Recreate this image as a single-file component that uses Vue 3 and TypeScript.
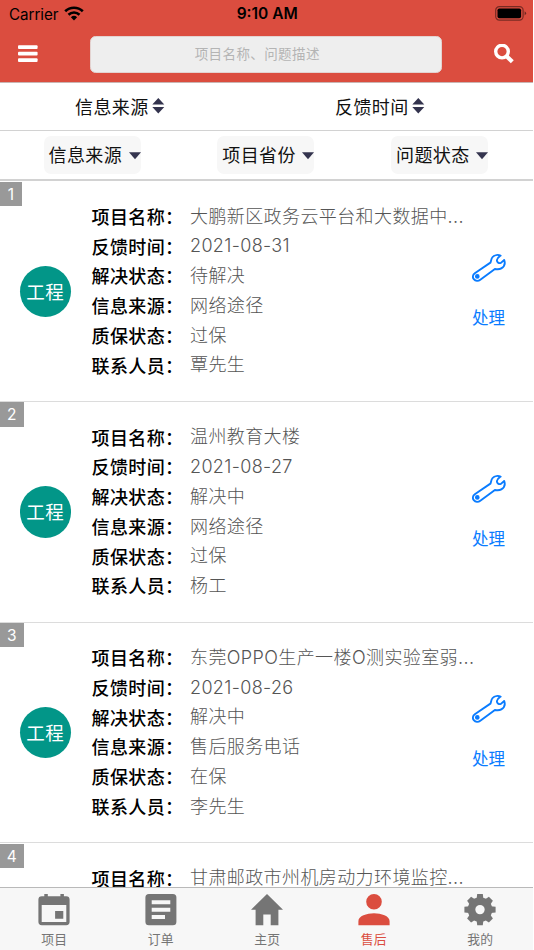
<script setup lang="ts">
import { ref } from 'vue'

interface Ticket {
  name: string
  date?: string
  state?: string
  source?: string
  warranty?: string
  contact?: string
}

const keyword = ref('')
const sorts: string[] = ['信息来源', '反馈时间']
const filters: string[] = ['信息来源', '项目省份', '问题状态']

const tickets: Ticket[] = [
  { name: '大鹏新区政务云平台和大数据中...', date: '2021-08-31', state: '待解决', source: '网络途径', warranty: '过保', contact: '覃先生' },
  { name: '温州教育大楼', date: '2021-08-27', state: '解决中', source: '网络途径', warranty: '过保', contact: '杨工' },
  { name: '东莞OPPO生产一楼O测实验室弱...', date: '2021-08-26', state: '解决中', source: '售后服务电话', warranty: '在保', contact: '李先生' },
  { name: '甘肃邮政市州机房动力环境监控...' },
]

const fields: { key: keyof Ticket; label: string }[] = [
  { key: 'name', label: '项目名称' },
  { key: 'date', label: '反馈时间' },
  { key: 'state', label: '解决状态' },
  { key: 'source', label: '信息来源' },
  { key: 'warranty', label: '质保状态' },
  { key: 'contact', label: '联系人员' },
]

const visibleFields = (t: Ticket) => fields.filter((f) => t[f.key])

const tabs = [
  { id: 'project', label: '项目' },
  { id: 'order', label: '订单' },
  { id: 'home', label: '主页' },
  { id: 'service', label: '售后' },
  { id: 'mine', label: '我的' },
]
const active = ref('service')
</script>

<template>
  <div class="screen">
    <header class="top">
      <div class="status">
        <div class="carrier">
          <span>Carrier</span>
          <svg width="20" height="15" viewBox="0 0 20 15">
            <g fill="none" stroke="#000" stroke-width="2.6">
              <path d="M1.2 5.3a12.6 12.6 0 0 1 17.6 0" />
              <path d="M4.5 8.8a7.9 7.9 0 0 1 11 0" />
            </g>
            <path d="M6.9 11.2a4.5 4.5 0 0 1 6.2 0L10 14.4z" />
          </svg>
        </div>
        <div class="clock">9:10 AM</div>
        <div class="battery">
          <svg width="32" height="15" viewBox="0 0 32 15">
            <rect x=".7" y=".7" width="27.4" height="13.4" rx="3.6" fill="none" stroke="#000" stroke-opacity=".45" stroke-width="1.2" />
            <rect x="2.5" y="2.5" width="23.6" height="9.8" rx="1.8" />
            <path d="M29.6 5.2q3 2.1 0 4.4z" fill-opacity=".5" />
          </svg>
        </div>
      </div>
      <div class="bar">
        <button class="icon-btn" aria-label="menu">
          <svg width="20" height="18" viewBox="0 0 20 18" fill="#fff">
            <rect y="0.2" width="19.6" height="3.9" rx="1" />
            <rect y="6.7" width="19.6" height="3.9" rx="1" />
            <rect y="13.2" width="19.6" height="3.9" rx="1" />
          </svg>
        </button>
        <input v-model="keyword" class="search" type="text" placeholder="项目名称、问题描述" />
        <button class="icon-btn" aria-label="search">
          <svg width="20" height="20" viewBox="0 0 20 20" fill="none" stroke="#fff">
            <circle cx="8" cy="7.6" r="6.3" stroke-width="3.4" />
            <path d="M12.4 12l5.9 5.7" stroke-width="4.2" />
          </svg>
        </button>
      </div>
    </header>

    <div class="sorts">
      <div v-for="s in sorts" :key="s" class="sort">
        <span>{{ s }}</span>
        <svg width="13" height="16" viewBox="0 0 13 16" fill="#34344e">
          <path d="M6.3 0L12.3 6.6H.3zM.3 9.1h12L6.3 15.6z" />
        </svg>
      </div>
    </div>

    <div class="filters">
      <div v-for="f in filters" :key="f" class="filter">
        <span>{{ f }}</span>
        <svg width="12" height="8" viewBox="0 0 12 8" fill="#34344e"><path d="M0 .3h12L6 7.3z" /></svg>
      </div>
    </div>

    <main class="list">
      <article v-for="(t, i) in tickets" :key="i" class="card">
        <div class="index" :class="{ first: i === 0 }">{{ i + 1 }}</div>
        <div class="kind"><div v-if="t.state" class="avatar">工程</div></div>
        <div class="fields">
          <div v-for="f in visibleFields(t)" :key="f.key" class="row">
            <span class="label">{{ f.label }}：</span>
            <span class="value" :class="{ date: f.key === 'date' }">{{ t[f.key] }}</span>
          </div>
        </div>
        <div v-if="t.state" class="action">
          <svg width="34" height="28" viewBox="0 0 34 28" fill="none" stroke="#0a7cff" stroke-width="1.9" stroke-linejoin="round" stroke-linecap="round">
            <path d="M28.6 1.6C26.2.6 22.5.8 20.6 3 18.8 5 19.3 7.3 18.4 8.6L2.8 19.2C.6 20.8.4 23.6 1.8 25.2 3.5 27.3 6.4 27.2 8.3 25.8L22.9 15C25 15.4 27.3 15.6 29.3 14.4 32.2 12.7 33.4 9.4 32.2 6L28.9 8.9C27 9.6 24.7 8.5 24.9 6 25.1 4 26.8 2.9 28.6 1.6Z" />
            <circle cx="5.3" cy="22.4" r="1.4" fill="#0a7cff" />
          </svg>
          <span>处理</span>
        </div>
      </article>
    </main>

    <nav class="tabs">
      <button v-for="t in tabs" :key="t.id" class="tab" :class="{ active: active === t.id }" @click="active = t.id">
        <svg width="32" height="32" viewBox="0 0 32 32" fill="currentColor">
          <path v-if="t.id === 'project'" fill-rule="evenodd" d="M6.3 0h3.5v2.2h12.6V0h3.5v2.2h2.3a3.4 3.4 0 0 1 3.4 3.4v22.2a3.4 3.4 0 0 1-3.4 3.4H3.8a3.4 3.4 0 0 1-3.4-3.4V5.6a3.4 3.4 0 0 1 3.4-3.4h2.5zM3.7 11v16.9h24.6V11zM17.1 16.9h8.2v7.9h-8.2z" />
          <path v-else-if="t.id === 'order'" fill-rule="evenodd" d="M3.9 0h24a3.5 3.5 0 0 1 3.5 3.5v24.2a3.5 3.5 0 0 1-3.5 3.5h-24a3.5 3.5 0 0 1-3.5-3.5V3.5A3.5 3.5 0 0 1 3.9 0zM6.7 6.3v4h18.6v-4zM6.7 13.8v4h18.6v-4zM6.7 21v4H20v-4z" />
          <path v-else-if="t.id === 'home'" d="M16 0L32 15.7h-4.6v15.5h-7.7V20.5h-7.4v10.7H4.6V15.7H0z" />
          <path v-else-if="t.id === 'service'" d="M16 0a7.8 7.8 0 1 1 0 15.6A7.8 7.8 0 0 1 16 0zM.4 31.2v-4C.4 22 8.8 19.3 16 19.3S31.6 22 31.6 27.2v4z" />
          <g v-else>
            <circle cx="16" cy="15.6" r="8.5" fill="none" stroke="currentColor" stroke-width="7.6" />
            <path v-for="a in [0, 90, 180, 270]" :key="a" :transform="`rotate(${a} 16 15.6)`" d="M13.2 0h5.6l.6 5h-6.8z" />
            <path v-for="a in [45, 135, 225, 315]" :key="a" :transform="`rotate(${a} 16 15.6)`" d="M13.2.2h5.6l1 5h-7.6z" />
          </g>
        </svg>
        <span>{{ t.label }}</span>
      </button>
    </nav>
  </div>
</template>

<style>
body {
  background: #fff;
}
</style>

<style scoped>
.screen {
  width: 532.5px;
  height: 950px;
  display: flex;
  flex-direction: column;
  overflow: hidden;
  background: #fff;
  color: #000;
  font-family: Inter, 'Noto Sans CJK SC', sans-serif;
  font-size: 18px;
  letter-spacing: 0.4px;
}
button {
  border: 0;
  padding: 0;
  background: none;
  font: inherit;
  letter-spacing: inherit;
}
svg {
  display: block;
  flex: none;
}
.top {
  flex: none;
  height: 82px;
  background: #db4d3f;
  border-bottom: 1px solid #c9b5b3;
}
.status {
  height: 27px;
  display: grid;
  grid-template-columns: 1fr auto 1fr;
  align-items: center;
  padding: 0 6px 0 9px;
  font-size: 15.5px;
  letter-spacing: 0;
}
.carrier {
  display: flex;
  align-items: center;
  gap: 6px;
  font-size: 15.2px;
  letter-spacing: -0.05px;
}
.carrier span {
  padding-top: 1px;
}
.clock {
  font-weight: 600;
  padding-right: 1px;
}
.battery {
  display: flex;
  justify-content: flex-end;
}
.bar {
  display: flex;
  align-items: center;
  justify-content: space-between;
  padding: 9px 19px 0 18px;
}
.icon-btn {
  width: 20px;
}
.icon-btn:first-child {
  margin-top: -2px;
}
.icon-btn:last-child {
  margin-top: -1px;
}
.search {
  box-sizing: border-box;
  width: 352px;
  height: 37px;
  border: 1px solid #e3d3d1;
  border-radius: 5.5px;
  background: #eee;
  padding: 0 17px 2px 0;
  text-align: center;
  font: 13.5px Inter, 'Noto Sans CJK SC', sans-serif;
  letter-spacing: 0.4px;
  outline: none;
}
.search::placeholder {
  color: #b4b4b4;
}
.sorts {
  flex: none;
  height: 47px;
  display: flex;
  border-bottom: 1px solid #d2d2d2;
  color: #111;
}
.sort {
  width: 260px;
  box-sizing: border-box;
  display: flex;
  align-items: center;
  gap: 3px;
  padding: 0 0 1px 75px;
}
.filters {
  flex: none;
  height: 48px;
  display: flex;
  align-items: center;
  justify-content: space-between;
  padding: 0 44.5px 0 43.5px;
  border-bottom: 2px solid #d2d2d2;
  color: #111;
}
.filter {
  width: 97px;
  height: 38px;
  box-sizing: border-box;
  display: flex;
  align-items: center;
  justify-content: space-between;
  padding: 0 0 2px 5px;
  border-radius: 7px;
  background: #f7f7f7;
}
.filter svg {
  margin-top: 3px;
}
.list {
  flex: 1;
  min-height: 0;
  overflow: hidden;
  padding-top: 0.5px;
}
.card {
  box-sizing: border-box;
  height: 220.6px;
  display: flex;
  position: relative;
  border-bottom: 1.3px solid #dcdcdc;
}
.index {
  position: absolute;
  left: 0;
  top: 0.3px;
  width: 24px;
  height: 24.5px;
  line-height: 26px;
  text-align: center;
  background: #999;
  color: #fff;
  font-size: 15.5px;
}
.index.first {
  width: 22px;
}
.kind {
  width: 91.5px;
  display: flex;
  align-items: center;
  padding-left: 19.5px;
  box-sizing: border-box;
}
.avatar {
  width: 51.5px;
  height: 51.5px;
  border-radius: 50%;
  background: #029688;
  color: #fff;
  font-size: 18.5px;
  line-height: 53px;
  text-align: center;
}
.fields {
  width: 370px;
  padding-top: 20.2px;
}
.row {
  display: flex;
  height: 29.75px;
  line-height: 29.75px;
  white-space: nowrap;
}
.label {
  width: 98.5px;
  flex: none;
  font-weight: 500;
  padding-top: 1.3px;
}
.value {
  color: #555;
  font-weight: 300;
}
.date {
  letter-spacing: 0.35px;
}
.action {
  margin-left: 10px;
  padding-top: 72.5px;
  display: flex;
  flex-direction: column;
  align-items: center;
  gap: 23px;
  color: #0a7cff;
  font-size: 16.5px;
  letter-spacing: 0;
  line-height: 26px;
}
.tabs {
  flex: none;
  height: 63px;
  box-sizing: border-box;
  display: flex;
  padding-left: 1px;
  margin-right: -1px;
  background: #f7f7f7;
  border-top: 1px solid #b9b9b9;
  font-size: 12.8px;
  letter-spacing: 0.2px;
}
.tab {
  flex: 1;
  display: flex;
  flex-direction: column;
  align-items: center;
  padding-top: 6px;
  gap: 4px;
  color: #757575;
  line-height: 19px;
}
.tab.active {
  color: #db4d3f;
}
</style>
